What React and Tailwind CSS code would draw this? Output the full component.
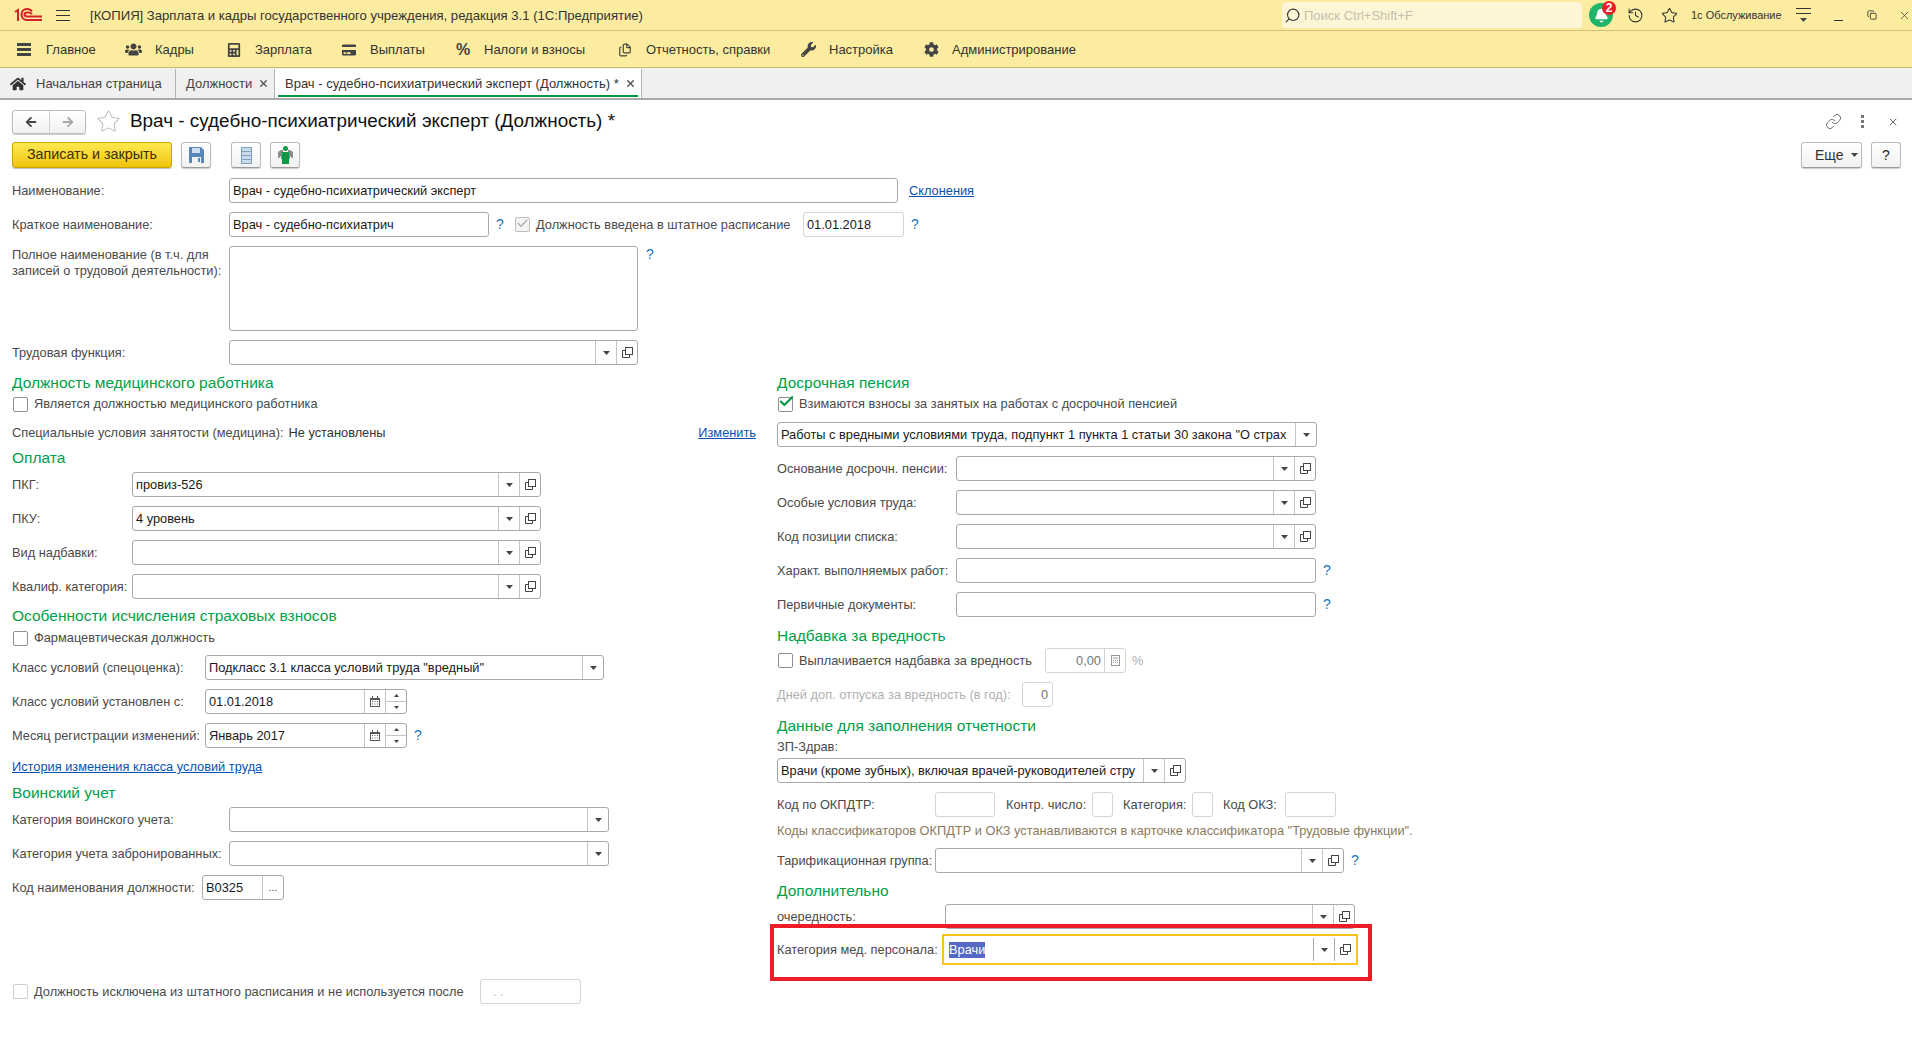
import React from 'react';
import { FaHome, FaUsers, FaCalculator, FaCreditCard, FaWrench, FaCog, FaArrowLeft, FaArrowRight } from 'react-icons/fa';
import { Files, Search, History, Star, Link, X, Check, Bell, Copy } from 'lucide-react';

const Caret = () => (
  <svg width="7" height="4" viewBox="0 0 7 4"><path d="M0 0h7L3.5 4z" fill="#444" /></svg>
);

const OpenIcon = () => (
  <svg width="11" height="11" viewBox="0 0 11 11" fill="none" stroke="#444">
    <rect x="3.5" y="0.5" width="7" height="7" />
    <path d="M3.5 3.5h-3v7h7v-3" />
  </svg>
);

const CalIcon = () => (
  <svg width="10" height="11" viewBox="0 0 10 11">
    <path d="M0 2h10v9H0z" fill="#555" />
    <path d="M1 4h8v6H1z" fill="#fff" />
    <path d="M2 0h1v3H2zM7 0h1v3H7zM2 5h1v1H2zM4.500 5h1v1h-1zM7 5h1v1H7zM2 7.500h1v1H2zM4.500 7.500h1v1h-1zM7 7.500h1v1H7z" fill="#555" />
  </svg>
);

const Spin = () => (
  <div className="flex flex-col w-full h-full">
    <div className="flex-1 flex items-center justify-center border-b border-[#c4c4c4]">
      <svg width="5" height="3" viewBox="0 0 5 3"><path d="M0 3h5L2.500 0z" fill="#444" /></svg>
    </div>
    <div className="flex-1 flex items-center justify-center">
      <svg width="5" height="3" viewBox="0 0 5 3"><path d="M0 0h5L2.500 3z" fill="#444" /></svg>
    </div>
  </div>
);

const btnIcons = {
  caret: <Caret />,
  open: <OpenIcon />,
  cal: <CalIcon />,
  spin: <Spin />,
  dots: <span className="text-[#444] text-[11px] leading-none">...</span>,
};

function Field({ w, value, btns = [], faint, className = '' }) {
  return (
    <div
      className={`flex h-[25px] shrink-0 bg-white border rounded-[3px] ${faint ? 'border-[#d4d4d4]' : 'border-[#a9a9a9]'} ${className}`}
      style={{ width: w }}
    >
      <div className="flex-1 min-w-0 px-[3px] leading-[23px] text-[#1a1a1a] overflow-hidden whitespace-nowrap">{value}</div>
      {btns.map((b, i) => (
        <div key={i} className="w-[21px] shrink-0 flex items-center justify-center border-l border-[#c4c4c4]">
          {btnIcons[b]}
        </div>
      ))}
    </div>
  );
}

const Q = ({ className = '' }) => <span className={`text-[#1b75bb] text-[14px] ${className}`}>?</span>;

function Row({ label, lw, mt = 'mt-[9px]', children }) {
  return (
    <div className={`flex items-center h-[25px] ${mt}`}>
      <div className="shrink-0 text-[#4a4a4a] whitespace-nowrap" style={{ width: lw }}>{label}</div>
      {children}
    </div>
  );
}

const Heading = ({ children }) => (
  <div className="h-[22px] leading-[22px] text-[15.5px] text-[#00a04a] whitespace-nowrap">{children}</div>
);

function CheckRow({ label, checked, faint, grey }) {
  return (
    <div className="flex items-center h-[20px]">
      <div className={`relative w-[15px] h-[15px] ml-[1px] shrink-0 bg-white border rounded-[2px] ${faint ? 'border-[#cfcfcf]' : 'border-[#8f8f8f]'}`}>
        {checked && <Check size={17} strokeWidth={3} className="absolute left-[-1px] top-[-5px] text-[#00973f]" />}
      </div>
      <span className={`ml-[6px] whitespace-nowrap ${grey ? 'text-[#6a6a6a]' : 'text-[#4a4a4a]'}`}>{label}</span>
    </div>
  );
}

function ToolBtn({ className = '', children }) {
  return (
    <div className={`h-[26px] flex items-center justify-center bg-gradient-to-b from-white to-[#f1f1f1] border border-[#bdbdbd] border-b-[#9a9a9a] rounded-[3px] shadow-[0_1px_1px_rgba(0,0,0,0.2)] ${className}`}>
      {children}
    </div>
  );
}

const navItems = [
  { name: 'Главное', icon: <div className="w-[14px] h-[13px] flex flex-col justify-between"><i className="block h-[3px] bg-[#444]" /><i className="block h-[3px] bg-[#444]" /><i className="block h-[3px] bg-[#444]" /></div>, cls: 'w-[108px]', slot: 'w-[29px]' },
  { name: 'Кадры', icon: <FaUsers size={17} color="#444" />, cls: 'w-[102px]', slot: 'w-[30px]' },
  { name: 'Зарплата', icon: <FaCalculator size={14} color="#444" />, cls: 'w-[115px]', slot: 'w-[28px]' },
  { name: 'Выплаты', icon: <FaCreditCard size={14} color="#444" />, cls: 'w-[114px]', slot: 'w-[28px]' },
  { name: 'Налоги и взносы', icon: <span className="text-[16px] font-bold text-[#444] leading-none">%</span>, cls: 'w-[162px]', slot: 'w-[28px]' },
  { name: 'Отчетность, справки', icon: <Files size={14} color="#444" />, cls: 'w-[183px]', slot: 'w-[28px]' },
  { name: 'Настройка', icon: <FaWrench size={15} color="#444" />, cls: 'w-[123px]', slot: 'w-[28px]' },
  { name: 'Администрирование', icon: <FaCog size={15} color="#444" />, cls: 'w-[150px]', slot: 'w-[28px]' },
];

export default function App() {
  return (
    <div className="w-[1912px] h-[1040px] overflow-hidden bg-white text-[13px] text-[#333]" style={{ fontFamily: '"Liberation Sans", Arial, sans-serif' }}>
      {/* Title bar */}
      <div className="h-[31px] flex items-center bg-[#fbec9f] border-b border-[#cfc07a]">
        <svg width="30" height="15" viewBox="0 0 30 15" className="ml-[13px] shrink-0" fill="none" stroke="#d3232a" strokeWidth="2">
          <path d="M2 4l3-2v11" />
          <path d="M19 3.500c-1-1.500-3-2.500-5-2.500-3.500 0-5.500 2.500-5.500 5.500s2 5.500 5.500 5.500h15" />
          <path d="M19 6c-1-1-2-1.500-4.500-1.500-2 0-3 1-3 2s1 2 3 2h14.500" />
        </svg>
        <div className="ml-[13px] w-[14px] h-[11px] flex flex-col justify-between shrink-0">
          <i className="block h-px bg-[#333]" /><i className="block h-px bg-[#333]" /><i className="block h-px bg-[#333]" />
        </div>
        <div className="ml-[20px] w-[1192px] pt-[1px] whitespace-nowrap text-[13.1px] text-[#333]">[КОПИЯ] Зарплата и кадры государственного учреждения, редакция 3.1  (1С:Предприятие)</div>
        <div className="w-[300px] h-[26px] flex items-center bg-[#fdf6d6] rounded-[3px]">
          <Search size={17} strokeWidth={1.6} className="ml-[2px] -scale-x-100 text-[#333]" />
          <span className="ml-[3px] pt-[1px] text-[#c4c0ac]">Поиск Ctrl+Shift+F</span>
        </div>
        <div className="relative ml-[7px] w-[24px] h-[24px] shrink-0 rounded-full bg-[#1fb56a] flex items-center justify-center">
          <Bell size={15} fill="#fff" className="text-white" />
          <span className="absolute right-[-3px] top-[-2px] w-[14px] h-[14px] rounded-full bg-[#ee1c25] text-white text-[12px] font-bold leading-[14px] text-center">2</span>
        </div>
        <History size={17} strokeWidth={1.5} className="ml-[14px] shrink-0 text-[#333]" />
        <Star size={17} strokeWidth={1.5} className="ml-[17px] shrink-0 text-[#333]" />
        <span className="ml-[13px] w-[92px] shrink-0 text-[11px] whitespace-nowrap text-[#333]">1с Обслуживание</span>
        <div className="ml-[13px] w-[15px] shrink-0 flex flex-col items-center gap-[4px]">
          <i className="block w-full h-px bg-[#333]" />
          <i className="block w-full h-px bg-[#333]" />
          <Caret />
        </div>
        <div className="ml-[23px] mt-[10px] w-[9px] h-px shrink-0 bg-[#333]" />
        <Copy size={10} className="ml-[24px] shrink-0 text-[#333]" />
        <X size={13} strokeWidth={1.3} className="ml-[21px] shrink-0 text-[#333]" />
      </div>

      {/* Main menu */}
      <div className="h-[37px] flex items-center pl-[17px] pt-[1px] bg-[#fbec9f] border-b border-[#c9b864]">
        {navItems.map(n => (
          <div key={n.name} className={`flex items-center shrink-0 ${n.cls}`}>
            <div className={`flex items-center shrink-0 ${n.slot}`}>{n.icon}</div>
            <span className="whitespace-nowrap text-[#333]">{n.name}</span>
          </div>
        ))}
      </div>

      {/* Tabs */}
      <div className="h-[32px] flex pt-[1px] bg-[#f0f0f0] border-b-2 border-[#a9a9a9]">
        <div className="w-[176px] flex items-center border-r border-[#b4b4b4]">
          <FaHome size={16} color="#333" className="ml-[10px]" />
          <span className="ml-[10px] text-[#444]">Начальная страница</span>
        </div>
        <div className="w-[99px] flex items-center border-r border-[#b4b4b4]">
          <span className="ml-[10px] text-[#444]">Должности</span>
          <X size={11} strokeWidth={3} className="ml-[6px] text-[#555]" />
        </div>
        <div className="relative w-[367px] flex items-center bg-white border-r border-[#b4b4b4]">
          <span className="ml-[10px] whitespace-nowrap text-[#333]">Врач - судебно-психиатрический эксперт (Должность) *</span>
          <X size={11} strokeWidth={3} className="ml-[6px] text-[#555]" />
          <div className="absolute left-[3px] right-[3px] bottom-[1px] h-[2px] bg-[#00963f]" />
        </div>
      </div>

      {/* Form header */}
      <div className="h-[41px] flex items-center pl-[12px] pr-[12px] pt-[2px]">
        <div className="w-[74px] h-[24px] flex bg-gradient-to-b from-white to-[#f1f1f1] border border-[#bdbdbd] rounded-[3px] shadow-[0_1px_1px_rgba(0,0,0,0.2)]">
          <div className="w-[37px] flex items-center justify-center border-r border-[#d0d0d0]"><FaArrowLeft size={12} color="#444" /></div>
          <div className="flex-1 flex items-center justify-center"><FaArrowRight size={12} color="#a8a8a8" /></div>
        </div>
        <Star size={25} strokeWidth={1} className="ml-[10px] text-[#bdbdbd]" />
        <span className="ml-[9px] text-[18.9px] text-[#111] whitespace-nowrap">Врач - судебно-психиатрический эксперт (Должность) *</span>
        <Link size={17} strokeWidth={1.3} className="ml-auto text-[#666]" />
        <div className="ml-[19px] flex flex-col gap-[2px]">
          <i className="block w-[3px] h-[3px] bg-[#777]" /><i className="block w-[3px] h-[3px] bg-[#777]" /><i className="block w-[3px] h-[3px] bg-[#777]" />
        </div>
        <X size={12} className="ml-[23px] mr-[1px] text-[#666]" />
      </div>

      {/* Toolbar */}
      <div className="h-[26px] flex items-center pl-[12px] pr-[11px] mt-[1px]">
        <div className="w-[160px] h-[26px] flex items-center justify-center bg-gradient-to-b from-[#ffe94d] to-[#f0c400] border border-[#cda600] rounded-[3px] shadow-[0_1px_1px_rgba(0,0,0,0.25)] text-[14.3px] text-[#3a3000]">
          Записать и закрыть
        </div>
        <ToolBtn className="w-[30px] ml-[9px]">
          <svg width="15" height="16" viewBox="0 0 15 16"><path d="M0 0h12l3 3v13H0z" fill="#5b87b8" /><path d="M3 1h8v5H3z" fill="#cfdff0" /><path d="M3 10h9v6H3z" fill="#eef3f8" /><path d="M9 11h2v4H9z" fill="#5b87b8" /></svg>
        </ToolBtn>
        <ToolBtn className="w-[30px] ml-[20px]">
          <svg width="11" height="17" viewBox="0 0 11 17"><path d="M0 0h11v17H0z" fill="#7d9fc0" /><path d="M1 1h9v3H1zM1 5h9v3H1zM1 9h9v3H1zM1 13h9v3H1z" fill="#c9d9e8" /></svg>
        </ToolBtn>
        <ToolBtn className="w-[30px] ml-[9px]">
          <svg width="15" height="18" viewBox="0 0 15 18"><path d="M0 6l3-2h2v9H3v-3L1 12H0zM15 6l-3-2h-2v9h2v-3l2 2h1z" fill="#8a8a8a" /><circle cx="7.500" cy="2.500" r="2.500" fill="#0c9a45" /><path d="M4 6h7v12H4z" fill="#0c9a45" /></svg>
        </ToolBtn>
        <ToolBtn className="w-[61px] ml-auto !justify-start pl-[13px]">
          <span className="text-[14px] text-[#333] mr-[7px]">Еще</span><Caret />
        </ToolBtn>
        <ToolBtn className="w-[30px] ml-[9px]"><span className="text-[14px] text-[#222]">?</span></ToolBtn>
      </div>

      <div className="text-[12.8px]">
        {/* Top fields */}
        <div className="pl-[12px] mt-[10px]">
          <Row label="Наименование:" lw={217} mt="">
            <Field w={669} value="Врач - судебно-психиатрический эксперт" />
            <a className="ml-[11px] text-[#0b50b5] underline">Склонения</a>
          </Row>
          <Row label="Краткое наименование:" lw={217}>
            <Field w={260} value="Врач - судебно-психиатрич" />
            <div className="w-[26px] shrink-0 pl-[7px]"><Q /></div>
            <div className="relative w-[15px] h-[15px] shrink-0 bg-[#f4f4f4] border border-[#bfbfbf] rounded-[2px]">
              <Check size={13} strokeWidth={3} className="absolute left-0 top-[-1px] text-[#b0b0b0]" />
            </div>
            <span className="ml-[6px] w-[267px] shrink-0 whitespace-nowrap text-[#4a4a4a]">Должность введена в штатное расписание</span>
            <Field w={101} value="01.01.2018" faint />
            <Q className="ml-[7px]" />
          </Row>
          <div className="flex mt-[9px] h-[85px]">
            <div className="w-[217px] shrink-0 text-[#4a4a4a] leading-[16px] pt-[1px]">Полное наименование (в т.ч. для<br />записей о трудовой деятельности):</div>
            <div className="w-[409px] h-full bg-white border border-[#a9a9a9] rounded-[3px]" />
            <Q className="ml-[8px] leading-[16px]" />
          </div>
          <Row label="Трудовая функция:" lw={217}>
            <Field w={409} btns={['caret', 'open']} />
          </Row>
        </div>

        {/* Two columns */}
        <div className="flex mt-[7px]">
          <div className="w-[777px] shrink-0 pl-[12px]">
            <Heading>Должность медицинского работника</Heading>
            <CheckRow label="Является должностью медицинского работника" />
            <div className="flex items-center h-[25px] mt-[6px]">
              <span className="text-[#4a4a4a]">Специальные условия занятости (медицина):</span>
              <span className="ml-[5px] text-[#333]">Не установлены</span>
              <a className="ml-auto mr-[21px] text-[#0b50b5] underline">Изменить</a>
            </div>
            <div className="mt-[2px]"><Heading>Оплата</Heading></div>
            <Row label="ПКГ:" lw={120} mt="mt-[3px]"><Field w={409} value="провиз-526" btns={['caret', 'open']} /></Row>
            <Row label="ПКУ:" lw={120}><Field w={409} value="4 уровень" btns={['caret', 'open']} /></Row>
            <Row label="Вид надбавки:" lw={120}><Field w={409} btns={['caret', 'open']} /></Row>
            <Row label="Квалиф. категория:" lw={120}><Field w={409} btns={['caret', 'open']} /></Row>
            <div className="mt-[6px]"><Heading>Особенности исчисления страховых взносов</Heading></div>
            <div className="mt-px"><CheckRow label="Фармацевтическая должность" /></div>
            <Row label="Класс условий (спецоценка):" lw={193} mt="mt-[7px]"><Field w={399} value={'Подкласс 3.1 класса условий труда "вредный"'} btns={['caret']} /></Row>
            <Row label="Класс условий установлен с:" lw={193}><Field w={202} value="01.01.2018" btns={['cal', 'spin']} /></Row>
            <Row label="Месяц регистрации изменений:" lw={193}>
              <Field w={202} value="Январь 2017" btns={['cal', 'spin']} />
              <Q className="ml-[7px]" />
            </Row>
            <a className="block mt-[9px] h-[20px] leading-[20px] text-[#0b50b5] underline">История изменения класса условий труда</a>
            <div className="mt-[5px]"><Heading>Воинский учет</Heading></div>
            <Row label="Категория воинского учета:" lw={217} mt="mt-[3px]"><Field w={380} btns={['caret']} /></Row>
            <Row label="Категория учета забронированных:" lw={217}><Field w={380} btns={['caret']} /></Row>
            <Row label="Код наименования должности:" lw={190}><Field w={82} value="В0325" btns={['dots']} /></Row>
            <div className="flex items-center h-[25px] mt-[79px]">
              <div className="w-[468px] shrink-0"><CheckRow label="Должность исключена из штатного расписания и не используется после" faint /></div>
              <div className="w-[101px] h-[25px] border border-[#d4d4d4] rounded-[3px] text-[#bbb] px-[12px] leading-[24px]">. .</div>
            </div>
          </div>

          <div className="flex-1 min-w-0">
            <Heading>Досрочная пенсия</Heading>
            <CheckRow label="Взимаются взносы за занятых на работах с досрочной пенсией" checked />
            <div className="mt-[8px]">
              <Field w={540} value={'Работы с вредными условиями труда, подпункт 1 пункта 1 статьи 30 закона "О страх'} btns={['caret']} />
            </div>
            <Row label="Основание досрочн. пенсии:" lw={179}><Field w={360} btns={['caret', 'open']} /></Row>
            <Row label="Особые условия труда:" lw={179}><Field w={360} btns={['caret', 'open']} /></Row>
            <Row label="Код позиции списка:" lw={179}><Field w={360} btns={['caret', 'open']} /></Row>
            <Row label="Характ. выполняемых работ:" lw={179}><Field w={360} /><Q className="ml-[7px]" /></Row>
            <Row label="Первичные документы:" lw={179}><Field w={360} /><Q className="ml-[7px]" /></Row>
            <div className="mt-[8px]"><Heading>Надбавка за вредность</Heading></div>
            <div className="flex items-center h-[25px] mt-px">
              <div className="w-[268px] shrink-0"><CheckRow label="Выплачивается надбавка за вредность" /></div>
              <div className="flex w-[81px] h-[25px] border border-[#d4d4d4] rounded-[3px] text-[#777]">
                <div className="flex-1 text-right pr-[3px] leading-[23px]">0,00</div>
                <div className="w-[21px] flex items-center justify-center border-l border-[#d4d4d4]">
                  <svg width="9" height="11" viewBox="0 0 9 11" fill="none" stroke="#999"><rect x="0.500" y="0.500" width="8" height="10" /><path d="M2 3h5M2 5.500h1M4 5.500h1M6 5.500h1M2 7.500h1M4 7.500h1M6 7.500h1" /></svg>
                </div>
              </div>
              <span className="ml-[6px] text-[#aaa]">%</span>
            </div>
            <div className="flex items-center h-[25px] mt-[9px]">
              <span className="w-[245px] shrink-0 text-[#b0b0b0] whitespace-nowrap">Дней доп. отпуска за вредность (в год):</span>
              <div className="w-[31px] h-[25px] border border-[#d4d4d4] rounded-[3px] text-right pr-[4px] leading-[23px] text-[#777]">0</div>
            </div>
            <div className="mt-[8px]"><Heading>Данные для заполнения отчетности</Heading></div>
            <div className="h-[20px] leading-[20px] text-[#4a4a4a]">ЗП-Здрав:</div>
            <div className="mt-px">
              <Field w={409} value="Врачи (кроме зубных), включая врачей-руководителей стру" btns={['caret', 'open']} />
            </div>
            <div className="flex items-center h-[25px] mt-[9px]">
              <span className="w-[158px] shrink-0 text-[#4a4a4a]">Код по ОКПДТР:</span>
              <Field w={60} faint />
              <span className="ml-[11px] w-[86px] shrink-0 text-[#4a4a4a] whitespace-nowrap">Контр. число:</span>
              <Field w={21} faint />
              <span className="ml-[10px] w-[69px] shrink-0 text-[#4a4a4a]">Категория:</span>
              <Field w={21} faint />
              <span className="ml-[10px] w-[62px] shrink-0 text-[#4a4a4a] whitespace-nowrap">Код ОКЗ:</span>
              <Field w={51} faint />
            </div>
            <div className="h-[20px] leading-[20px] mt-[4px] text-[#8a7a5c] whitespace-nowrap">Коды классификаторов ОКПДТР и ОКЗ устанавливаются в карточке классификатора "Трудовые функции".</div>
            <Row label="Тарификационная группа:" lw={158} mt="mt-[7px]"><Field w={409} btns={['caret', 'open']} /><Q className="ml-[7px]" /></Row>
            <div className="mt-[7px]"><Heading>Дополнительно</Heading></div>
            <Row label="очередность:" lw={168} mt="mt-[2px]"><Field w={410} btns={['caret', 'open']} /></Row>

            {/* Highlighted row */}
            <div className="relative flex items-center h-[31px] mt-[5px]">
              <span className="w-[165px] shrink-0 text-[#4a4a4a] whitespace-nowrap">Категория мед. персонала:</span>
              <div className="flex w-[416px] h-[31px] bg-white border-2 border-[#f7c415]">
                <div className="flex-1 px-[5px] flex items-center">
                  <span className="bg-[#5468c4] text-white leading-[16px]">Врачи</span>
                </div>
                <div className="w-[21px] my-[2px] flex items-center justify-center border-l border-[#a9a9a9]"><Caret /></div>
                <div className="w-[21px] my-[2px] mr-[1px] flex items-center justify-center border-l border-[#a9a9a9]"><OpenIcon /></div>
              </div>
              <div className="absolute left-[-7px] top-[-10px] w-[602px] h-[57px] border-[4px] border-[#ee1c25] pointer-events-none" />
            </div>
          </div>
        </div>
      </div>
    </div>
  );
}
